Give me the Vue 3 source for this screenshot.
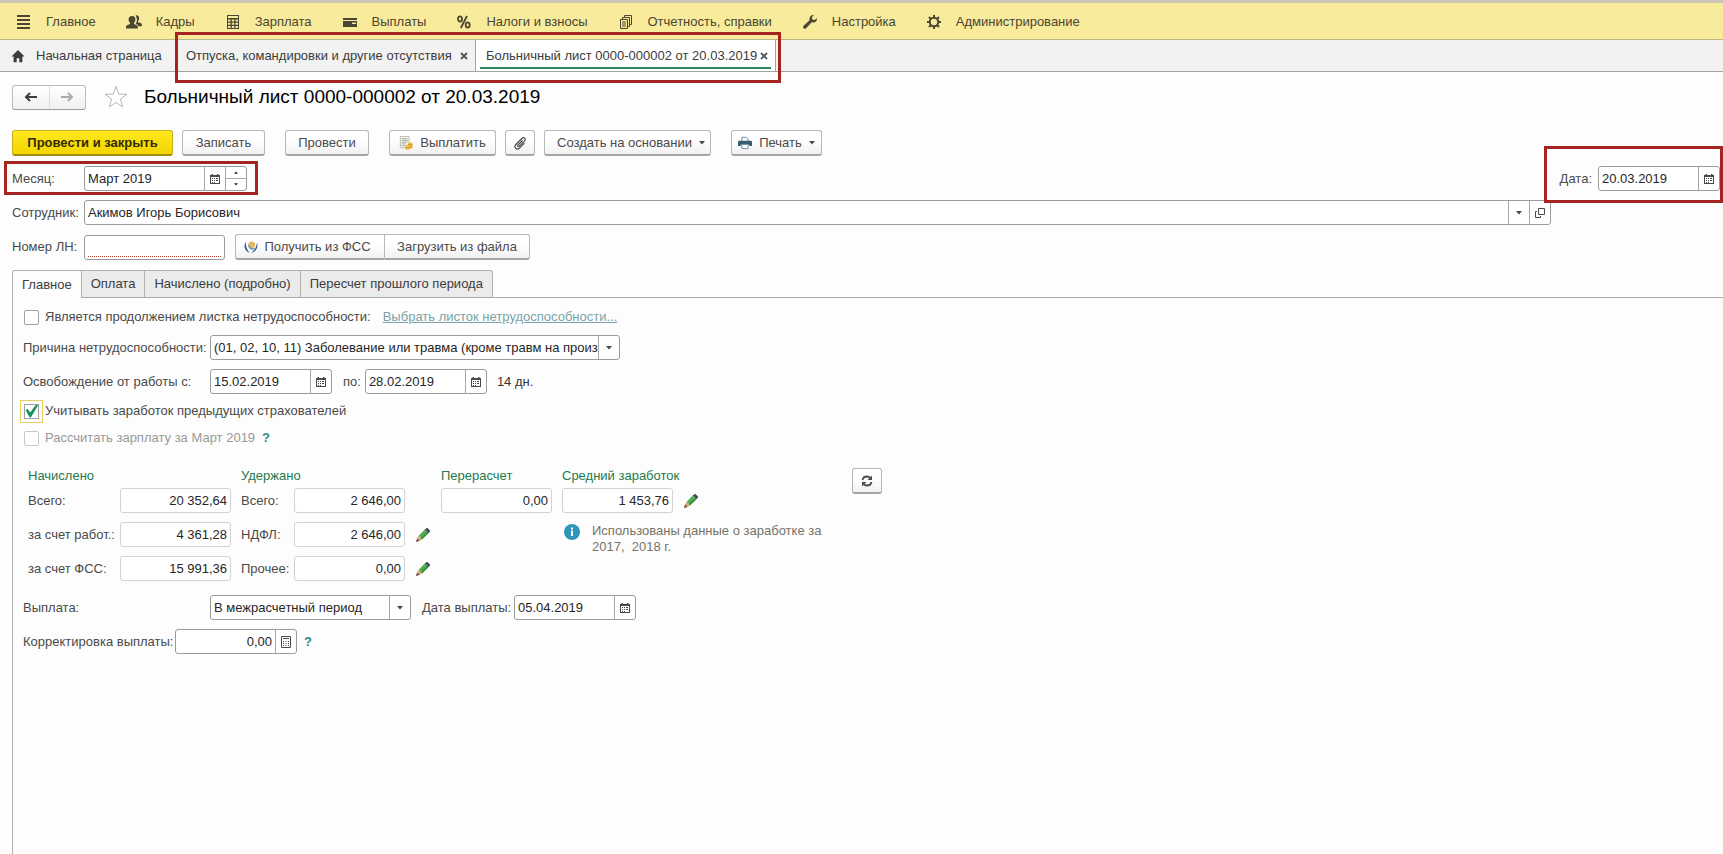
<script setup>
import { ref } from 'vue'

const sections = [
  { icon: 'menu', title: 'Главное' },
  { icon: 'people', title: 'Кадры' },
  { icon: 'calc', title: 'Зарплата' },
  { icon: 'card', title: 'Выплаты' },
  { icon: 'percent', title: 'Налоги и взносы' },
  { icon: 'docs', title: 'Отчетность, справки' },
  { icon: 'wrench', title: 'Настройка' },
  { icon: 'gear', title: 'Администрирование' },
]

const windows = [
  { title: 'Отпуска, командировки и другие отсутствия', active: false },
  { title: 'Больничный лист 0000-000002 от 20.03.2019', active: true },
]

const pages = ['Главное', 'Оплата', 'Начислено (подробно)', 'Пересчет прошлого периода']
const page = ref(0)

const accrued = [
  { id: 'acc-total', label: 'Всего:', value: '20 352,64' },
  { id: 'acc-employer', label: 'за счет работ.:', value: '4 361,28' },
  { id: 'acc-fss', label: 'за счет ФСС:', value: '15 991,36' },
]
const withheld = [
  { id: 'wh-total', label: 'Всего:', value: '2 646,00', edit: false },
  { id: 'wh-ndfl', label: 'НДФЛ:', value: '2 646,00', edit: true },
  { id: 'wh-other', label: 'Прочее:', value: '0,00', edit: true },
]

const month = ref('Март 2019')
const docDate = ref('20.03.2019')
const sheetNumber = ref('')
const dateFrom = ref('15.02.2019')
const dateTo = ref('28.02.2019')
const payDate = ref('05.04.2019')
const correction = ref('0,00')
const isContinuation = ref(false)
const usePrevious = ref(true)
</script>

<template>
  <div class="app">
    <svg class="sprite" aria-hidden="true">
      <symbol id="i-menu" viewBox="0 0 16 16"><path d="M1 1h13v2H1zM1 5h13v2H1zM1 9h13v2H1zM1 13h13v2H1z" fill="currentColor" /></symbol>
      <symbol id="i-people" viewBox="0 0 16 16">
        <path d="M9.500 1.500c2.200-.8 3.800.7 3.700 2.900-.1 1.300-.6 2-1.200 2.600v1l3 1.200c.6.300.9.800.9 1.400v1.600h-3.500c-.3-1-1-1.500-2-1.900l-.9-.4c.9-1 1.400-2.200 1.400-3.700 0-2-.5-3.500-1.400-4.700z" fill="currentColor" />
        <path d="M6 2c2.300 0 3.400 1.500 3.400 3.500 0 1.500-.6 2.600-1.400 3.300v1.200l2.800 1.200c.7.300 1 .9 1 1.600v1.700H0v-1.700c0-.7.3-1.300 1-1.600L4 10V8.800c-.9-.7-1.400-1.800-1.400-3.300C2.600 3.500 3.700 2 6 2z" fill="currentColor" />
      </symbol>
      <symbol id="i-calc" viewBox="0 0 16 16">
        <path d="M2 1h12v14H2zM3 2v2h10V2zM3 5.500v2h2.500v-2zM6.800 5.500v2h2.500v-2zM10.500 5.500v2H13v-2zM3 8.700v2h2.500v-2zM6.800 8.700v2h2.500v-2zM10.500 8.700v2H13v-2zM3 12v2h2.500v-2zM6.800 12v2h2.500v-2zM10.500 12v2H13v-2z" fill="currentColor" fill-rule="evenodd" />
      </symbol>
      <symbol id="i-card" viewBox="0 0 16 16"><path d="M1 4h14v2H1zM1 7h14v6H1zM10 8.500V10h4V8.500z" fill="currentColor" fill-rule="evenodd" /></symbol>
      <symbol id="i-percent" viewBox="0 0 16 16">
        <g fill="none" stroke="currentColor" stroke-width="1.800"><ellipse cx="4" cy="5" rx="2" ry="2.600" /><ellipse cx="11.700" cy="11" rx="2" ry="2.600" /><path d="M11 2 4.800 14" /></g>
      </symbol>
      <symbol id="i-docs" viewBox="0 0 16 16">
        <path d="M2.500 5.500h7v9h-7zM4.500 5V3.500h7v9H10M6.500 3V1.500h7v9H12M4 8h4M4 10h4M4 12h4" fill="none" stroke="currentColor" />
      </symbol>
      <symbol id="i-wrench" viewBox="0 0 16 16">
        <path d="M15 4.200c.3 2.600-1.700 4.500-4.300 4.200-.7-.1-1.100 0-1.500.4l-4.800 5.300c-.8.900-2 .9-2.800.2-.8-.8-.7-2 .2-2.800l5.300-4.800c.4-.4.5-.8.4-1.500C7.300 2.700 9.400.7 12 1.100L9.900 3.300l.4 2.300 2.400.5z" fill="currentColor" />
      </symbol>
      <symbol id="i-gear" viewBox="0 0 16 16">
        <circle cx="8" cy="8" r="4.200" fill="none" stroke="currentColor" stroke-width="2" />
        <path d="M8 1v3M8 12v3M1 8h3M12 8h3M3 3l2.200 2.200M10.800 10.800 13 13M13 3l-2.200 2.200M5.200 10.800 3 13" stroke="currentColor" stroke-width="2" />
      </symbol>
      <symbol id="i-home" viewBox="0 0 16 16"><path d="M8 1 .5 8.500H3V15h3.500v-4.500h3V15H13V8.500h2.500z" fill="currentColor" /></symbol>
      <symbol id="i-close" viewBox="0 0 8 8"><path d="m1 1 6 6M7 1 1 7" stroke="currentColor" stroke-width="1.800" /></symbol>
      <symbol id="i-arrow" viewBox="0 0 14 10"><path d="M13 5H2.500M6 1 2 5l4 4" fill="none" stroke="currentColor" stroke-width="2" /></symbol>
      <symbol id="i-star" viewBox="0 0 24 24"><path d="m12 1.500 2.700 7.600 8.100.2-6.400 4.900 2.300 7.800-6.700-4.600-6.700 4.600 2.300-7.800-6.400-4.900 8.100-.2z" fill="#fff" stroke="currentColor" /></symbol>
      <symbol id="i-calendar" viewBox="0 0 10 10">
        <path d="M0 1h1.500V0h1.500v1h4V0h1.500v1H10v9H0zM1 3v6h8V3z" fill="currentColor" fill-rule="evenodd" />
        <path d="M2 4h1v1H2zM4 4h1v1H4zM6 4h2v1H6zM2 6h1v1H2zM4 6h1v1H4zM6 6h2v1H6zM2 8h1v1H2zM4 8h1v1H4z" fill="currentColor" />
      </symbol>
      <symbol id="i-minicalc" viewBox="0 0 10 12">
        <path d="M.5.5h9v11h-9zM2 2.500h6" fill="none" stroke="currentColor" />
        <path d="M2 5h1v1H2zM4.500 5h1v1h-1zM7 5h1v1H7zM2 7h1v1H2zM4.500 7h1v1h-1zM7 7h1v1H7zM2 9h1v1H2zM4.500 9h1v1h-1zM7 9h1v1H7z" fill="currentColor" />
      </symbol>
      <symbol id="i-down" viewBox="0 0 6 4"><path d="M0 0h6L3 3.500z" fill="currentColor" /></symbol>
      <symbol id="i-open" viewBox="0 0 10 10"><path d="M3.500.5h6v6h-6zM2 3.500H.5v6h5V8" fill="none" stroke="currentColor" /></symbol>
      <symbol id="i-clip" viewBox="0 0 14 14">
        <path d="m9.500 4.500-4.600 4.600c-.9.900.3 2.100 1.200 1.200l5.500-5.500C13.500 2.900 11 .5 9.100 2.300L2.900 8.500c-2.600 2.700 1 6.200 3.600 3.600l5-5" fill="none" stroke="currentColor" stroke-width="1.200" />
      </symbol>
      <symbol id="i-pay" viewBox="0 0 16 16">
        <path d="M1.500.5h10v13h-10z" fill="#fdfcf6" stroke="#b3b1a4" />
        <path d="M3 3h7M3 5h7M3 7h7M3 9h5M3 11h4" stroke="#8d9b97" />
        <path d="M7 11.500c0-.9 1.300-1.500 3-1.500V8.500c0-.7 1.200-1.200 2.800-1.200s2.700.5 2.700 1.200V13c0 .7-1 1.200-2.300 1.300-.4.900-1.600 1.400-3.200 1.400s-3-.6-3-1.400z" fill="#f0c04e" />
        <path d="M7.300 12.800c1.500.9 4 .9 5.500 0M10.300 9.500c1.500.7 3.500.7 5 0M12.800 12.300c1 0 2-.2 2.600-.6" fill="none" stroke="#c98d2c" />
      </symbol>
      <symbol id="i-printer" viewBox="0 0 16 14">
        <path d="M4.500 5V.5h5l2 2V5" fill="#fff" stroke="#5c8296" />
        <path d="M1.500 4.500h13c.8 0 1.500.6 1.500 1.500v4.500h-3V9H3v1.500H0V6c0-.9.700-1.500 1.500-1.500z" fill="#375a6e" />
        <path d="M4.500 8.500h7v5h-7z" fill="#fff" stroke="#5c8296" />
      </symbol>
      <symbol id="i-fss" viewBox="0 0 16 16">
        <path d="M2.800 3C.2 6.500 1.500 12 6.500 13.800 3.800 10.500 2.600 7 2.800 3z" fill="#2c5b8c" />
        <path d="M14 3.500c1.500 4.500-1 9.500-6 10.700 3.500-2.400 5.500-6 6-10.700z" fill="#2c5b8c" />
        <circle cx="8.800" cy="5.800" r="3.300" fill="#e6b65a" />
        <path d="M5.300 4.500c-.7 3.500 1.500 6.500 4.900 6.200 1-.1 1.800-.8 2.200-1.700C9 10.300 6.300 8 5.300 4.500z" fill="#6d94b3" />
      </symbol>
      <symbol id="i-pencil" viewBox="0 0 14 14">
        <path d="m0 14 1.200-4.300 3.100 3.100z" fill="#5a4635" />
        <path d="m.9 10.800 1.900-3.100 3.500 3.500-3.100 1.900z" fill="#d9a577" />
        <path d="m2.700 7.800 6-6.200 3.700 3.700-6.200 6z" fill="#55ad52" />
        <path d="m4.900 10 6.200-6 1.300 1.300-6.200 6z" fill="#3a8f3f" />
        <path d="M8.700 1.600 10.300.2c.5-.4 1-.4 1.500 0l2 2c.4.500.4 1 0 1.500l-1.400 1.600z" fill="#42525a" />
      </symbol>
      <symbol id="i-info" viewBox="0 0 16 16">
        <circle cx="8" cy="8" r="8" fill="#2f95ba" /><path d="M7 6.500h2V12H7zM7 3.500h2v2H7z" fill="#fff" />
      </symbol>
      <symbol id="i-refresh" viewBox="0 0 12 12">
        <path d="M1.500 5C2 2.500 4 1.500 6 1.500c1.500 0 2.500.5 3.300 1.500M10.500 7C10 9.500 8 10.500 6 10.500c-1.500 0-2.500-.5-3.300-1.500" fill="none" stroke="currentColor" stroke-width="1.800" />
        <path d="M11 .5V5H6.500zM1 11.500V7h4.500z" fill="currentColor" />
      </symbol>
    </svg>

    <nav class="sections">
      <a v-for="s in sections" :key="s.title" href="#" class="section">
        <svg class="ic16"><use :href="'#i-' + s.icon" /></svg>
        <span>{{ s.title }}</span>
      </a>
    </nav>

    <div class="windows">
      <a href="#" class="home">
        <svg class="ic14"><use href="#i-home" /></svg>
        <span>Начальная страница</span>
      </a>
      <div class="opened marked">
        <div v-for="w in windows" :key="w.title" class="win" :class="{ active: w.active }">
          <a href="#">{{ w.title }}</a>
          <button type="button" class="close" aria-label="Закрыть"><svg class="ic8"><use href="#i-close" /></svg></button>
        </div>
      </div>
    </div>

    <main>
      <header class="title">
        <div class="history">
          <button type="button" aria-label="Назад"><svg class="arrow"><use href="#i-arrow" /></svg></button>
          <button type="button" aria-label="Вперед" class="forward"><svg class="arrow"><use href="#i-arrow" /></svg></button>
        </div>
        <button type="button" class="star" aria-label="В избранное"><svg class="ic24"><use href="#i-star" /></svg></button>
        <h1>Больничный лист 0000-000002 от 20.03.2019</h1>
      </header>

      <div class="commands">
        <button type="button" class="btn primary">Провести и закрыть</button>
        <button type="button" class="btn save">Записать</button>
        <button type="button" class="btn post">Провести</button>
        <button type="button" class="btn pay"><svg class="ic14"><use href="#i-pay" /></svg>Выплатить</button>
        <button type="button" class="btn icon" aria-label="Файлы"><svg class="ic14"><use href="#i-clip" /></svg></button>
        <button type="button" class="btn create">Создать на основании<svg class="tri"><use href="#i-down" /></svg></button>
        <button type="button" class="btn print"><svg class="ic14"><use href="#i-printer" /></svg>Печать<svg class="tri"><use href="#i-down" /></svg></button>
      </div>

      <div class="head">
        <div class="row between">
          <div class="row marked month">
            <label for="month" class="cap">Месяц:</label>
            <div class="field w-month">
              <input id="month" v-model="month" type="text" />
              <button type="button" aria-label="Календарь"><svg class="ic10"><use href="#i-calendar" /></svg></button>
              <div class="spin">
                <button type="button" aria-label="Следующий месяц"><svg class="mini up"><use href="#i-down" /></svg></button>
                <button type="button" aria-label="Предыдущий месяц"><svg class="mini"><use href="#i-down" /></svg></button>
              </div>
            </div>
          </div>
          <div class="row marked date">
            <label for="doc-date">Дата:</label>
            <div class="field w-date">
              <input id="doc-date" v-model="docDate" type="text" />
              <button type="button" aria-label="Календарь"><svg class="ic10"><use href="#i-calendar" /></svg></button>
            </div>
          </div>
        </div>

        <div class="row employee">
          <label for="employee" class="cap">Сотрудник:</label>
          <div class="field grow">
            <div class="pick">
              <select id="employee"><option>Акимов Игорь Борисович</option></select>
              <span class="drop"><svg class="tri"><use href="#i-down" /></svg></span>
            </div>
            <button type="button" aria-label="Открыть"><svg class="ic10"><use href="#i-open" /></svg></button>
          </div>
        </div>

        <div class="row">
          <label for="sheet" class="cap">Номер ЛН:</label>
          <div class="field w-sheet required"><input id="sheet" v-model="sheetNumber" type="text" /></div>
          <div class="pair">
            <button type="button" class="btn fss"><svg class="ic16"><use href="#i-fss" /></svg>Получить из ФСС</button>
            <button type="button" class="btn load">Загрузить из файла</button>
          </div>
        </div>
      </div>

      <div class="pages" role="tablist">
        <button
          v-for="(p, i) in pages"
          :key="p"
          type="button"
          role="tab"
          :aria-selected="page === i"
          :class="{ current: page === i }"
          @click="page = i"
        >{{ p }}</button>
      </div>

      <section class="panel">
        <div class="row check">
          <input id="cont" v-model="isContinuation" type="checkbox" />
          <label for="cont">Является продолжением листка нетрудоспособности:</label>
          <a href="#" class="link">Выбрать листок нетрудоспособности...</a>
        </div>

        <div class="row reason">
          <label for="reason" class="lead">Причина нетрудоспособности:</label>
          <div class="field w-reason">
            <div class="pick">
              <select id="reason"><option>(01, 02, 10, 11) Заболевание или травма (кроме травм на производстве)</option></select>
              <span class="drop"><svg class="tri"><use href="#i-down" /></svg></span>
            </div>
          </div>
        </div>

        <div class="row period">
          <label for="from" class="lead">Освобождение от работы с:</label>
          <div class="field w-date">
            <input id="from" v-model="dateFrom" type="text" />
            <button type="button" aria-label="Календарь"><svg class="ic10"><use href="#i-calendar" /></svg></button>
          </div>
          <label for="to" class="to">по:</label>
          <div class="field w-date">
            <input id="to" v-model="dateTo" type="text" />
            <button type="button" aria-label="Календарь"><svg class="ic10"><use href="#i-calendar" /></svg></button>
          </div>
          <span class="days">14 дн.</span>
        </div>

        <div class="row check focused">
          <input id="prev" v-model="usePrevious" type="checkbox" />
          <label for="prev">Учитывать заработок предыдущих страхователей</label>
        </div>

        <div class="row check muted">
          <input id="salary" type="checkbox" disabled />
          <label for="salary">Рассчитать зарплату за Март 2019</label>
          <button type="button" class="help">?</button>
        </div>

        <div class="totals">
          <div class="group">
            <h2>Начислено</h2>
            <div v-for="r in accrued" :key="r.id" class="row">
              <label :for="r.id" class="c-acc">{{ r.label }}</label>
              <input :id="r.id" class="sum" type="text" readonly :value="r.value" />
            </div>
          </div>
          <div class="group held">
            <h2>Удержано</h2>
            <div v-for="r in withheld" :key="r.id" class="row">
              <label :for="r.id" class="c-held">{{ r.label }}</label>
              <input :id="r.id" class="sum" type="text" readonly :value="r.value" />
              <button v-if="r.edit" type="button" class="edit" aria-label="Изменить"><svg class="ic14"><use href="#i-pencil" /></svg></button>
            </div>
          </div>
          <div class="group recalc">
            <h2><label for="recalc">Перерасчет</label></h2>
            <input id="recalc" class="sum" type="text" readonly value="0,00" />
          </div>
          <div class="group average">
            <h2><label for="average">Средний заработок</label></h2>
            <div class="row">
              <input id="average" class="sum" type="text" readonly value="1 453,76" />
              <button type="button" class="edit" aria-label="Изменить"><svg class="ic14"><use href="#i-pencil" /></svg></button>
            </div>
            <div class="note">
              <svg class="ic16"><use href="#i-info" /></svg>
              <p>Использованы данные о заработке за<br />2017,&nbsp; 2018 г.</p>
            </div>
          </div>
          <button type="button" class="btn icon" aria-label="Обновить"><svg class="ic12"><use href="#i-refresh" /></svg></button>
        </div>

        <div class="row payout">
          <label for="payout" class="lead">Выплата:</label>
          <div class="field w-payout">
            <div class="pick">
              <select id="payout"><option>В межрасчетный период</option></select>
              <span class="drop"><svg class="tri"><use href="#i-down" /></svg></span>
            </div>
          </div>
          <label for="pay-date" class="paydate">Дата выплаты:</label>
          <div class="field w-date">
            <input id="pay-date" v-model="payDate" type="text" />
            <button type="button" aria-label="Календарь"><svg class="ic10"><use href="#i-calendar" /></svg></button>
          </div>
        </div>

        <div class="row correction">
          <label for="corr" class="corr">Корректировка выплаты:</label>
          <div class="field w-date number">
            <input id="corr" v-model="correction" type="text" />
            <button type="button" aria-label="Калькулятор"><svg class="ic12"><use href="#i-minicalc" /></svg></button>
          </div>
          <button type="button" class="help">?</button>
        </div>
      </section>
    </main>
  </div>
</template>

<style>
body {
  margin: 0;
  background: #fdfdfd;
}
</style>

<style scoped>
* {
  box-sizing: border-box;
}
.app {
  display: flex;
  flex-direction: column;
  min-height: 100vh;
  font: 13px/16px "Liberation Sans", Arial, sans-serif;
  color: #4a4a4a;
  overflow-x: hidden;
}
a {
  color: inherit;
  text-decoration: none;
}
button,
input,
select {
  font: inherit;
  color: inherit;
  margin: 0;
}
button {
  padding: 0;
  border: 0;
  background: none;
}
svg {
  display: block;
  flex: none;
}
.sprite {
  position: absolute;
  width: 0;
  height: 0;
}
.ic8 { width: 8px; height: 8px; }
.ic10 { width: 10px; height: 10px; }
.ic12 { width: 12px; height: 12px; }
.ic14 { width: 14px; height: 14px; }
.ic16 { width: 16px; height: 16px; }
.ic24 { width: 24px; height: 24px; }
.tri { width: 6px; height: 4px; }
.mini { width: 4px; height: 3px; }
.up { transform: rotate(180deg); }
.arrow { width: 14px; height: 10px; }

.sections {
  display: flex;
  align-items: center;
  gap: 30px;
  height: 40px;
  padding: 1px 16px 0;
  border-top: 3px solid #c9c4b4;
  border-bottom: 1px solid #bdb78c;
  background: #f8eb9c;
  color: #4a4631;
}
.section {
  display: flex;
  align-items: center;
  gap: 14px;
  white-space: nowrap;
}
.windows {
  display: flex;
  height: 32px;
  border-bottom: 1px solid #a0a5a0;
  background: #f2f2f2;
  color: #3c3c3c;
}
.home {
  display: flex;
  align-items: center;
  gap: 11px;
  width: 176px;
  padding-left: 11px;
  white-space: nowrap;
}
.opened {
  display: flex;
}
.win {
  display: flex;
  align-items: center;
  justify-content: space-between;
  width: 300px;
  padding: 0 7px 0 10px;
  border-right: 1px solid #a0a5a0;
  white-space: nowrap;
}
.win.active {
  background: linear-gradient(#2e8560, #2e8560) 4px 27px / 291px 2px no-repeat #fff;
}
.close {
  color: #555;
}

.marked {
  position: relative;
}
.marked::after {
  content: "";
  position: absolute;
  border: 3px solid #a52420;
  pointer-events: none;
}
.opened::after {
  inset: -8px -5px -12px -1px;
}
.month::after {
  inset: -5px -11px -4px -8px;
}
.date::after {
  inset: -20px -3px -12px -16px;
}

main {
  display: flex;
  flex: 1;
  flex-direction: column;
  padding: 12px 0 0 12px;
}
.title {
  display: flex;
  align-items: center;
  height: 26px;
}
.history {
  display: flex;
  width: 74px;
  height: 25px;
  border: 1px solid #bcbcbc;
  border-bottom-color: #999;
  border-radius: 3px;
  background: linear-gradient(#fff, #f0f0f0);
  color: #3f3f3f;
}
.history button {
  display: flex;
  flex: 1;
  align-items: center;
  justify-content: center;
}
.history .forward {
  border-left: 1px solid #ddd;
  color: #aaa;
}
.forward svg {
  transform: scaleX(-1);
}
.star {
  margin: 0 16px 0 18px;
  color: #b5b5b5;
}
h1 {
  margin: 0;
  font-size: 19px;
  line-height: 24px;
  font-weight: 400;
  color: #000;
}
.commands {
  display: flex;
  margin-top: 20px;
}
.btn {
  display: flex;
  align-items: center;
  justify-content: center;
  height: 26px;
  padding-top: 1px;
  border: 1px solid #b8b8b8;
  border-bottom: 2px solid #a5a5a5;
  border-radius: 3px;
  background: linear-gradient(#fff 40%, #f1f1f1);
  white-space: nowrap;
}
.primary {
  width: 161px;
  border-color: #c9b01a #c9b01a #a08c14;
  background: linear-gradient(#ffe81f, #f3d500);
  font-weight: 700;
  color: #332c00;
}
.save { width: 83px; margin-left: 9px; }
.post { width: 84px; margin-left: 20px; }
.pay { width: 107px; margin-left: 20px; gap: 7px; }
.icon { width: 30px; margin-left: 9px; }
.create { width: 167px; margin-left: 9px; padding-left: 7px; gap: 7px; }
.print { width: 91px; margin-left: 20px; gap: 7px; }

.head {
  display: flex;
  flex-direction: column;
  gap: 9px;
  margin-top: 10px;
}
.row {
  display: flex;
  align-items: center;
  white-space: nowrap;
}
.between {
  justify-content: space-between;
  padding-right: 3px;
}
.cap {
  width: 72px;
}
.date {
  gap: 6px;
}
.employee {
  padding-right: 172px;
}
.field {
  display: flex;
  height: 25px;
  border: 1px solid #9b9b9b;
  border-radius: 3px;
  background: #fff;
  color: #262626;
  overflow: hidden;
}
.field input {
  flex: 1;
  min-width: 0;
  padding: 0 3px;
  border: 0;
  background: none;
  outline: 0;
}
.field > button,
.drop {
  display: flex;
  flex: none;
  align-items: center;
  justify-content: center;
  width: 21px;
  border-left: 1px solid #a8a8a8;
  color: #4a4a4a;
}
.spin {
  display: flex;
  flex: none;
  flex-direction: column;
  width: 21px;
  border-left: 1px solid #a8a8a8;
}
.spin button {
  display: flex;
  flex: 1;
  align-items: center;
  justify-content: center;
}
.spin button + button {
  border-top: 1px solid #a8a8a8;
}
.pick {
  display: grid;
  flex: 1;
  min-width: 0;
}
.pick > * {
  grid-area: 1 / 1;
}
.pick select {
  width: 100%;
  min-width: 0;
  padding: 0 21px 0 3px;
  border: 0;
  appearance: none;
  background: none;
  outline: 0;
}
.drop {
  justify-self: end;
  pointer-events: none;
}
.grow { flex: 1; }
.w-month { width: 163px; }
.w-date { width: 122px; }
.w-sheet { width: 141px; }
.w-reason { width: 410px; }
.w-payout { width: 201px; }
.required {
  padding: 0 3px 2px;
}
.required input {
  border-bottom: 1px dotted #b03a2a;
}
.number input {
  text-align: right;
}
.pair {
  display: flex;
  margin-left: 10px;
}
.fss {
  width: 149px;
  gap: 5px;
  padding-right: 6px;
  border-right: 0;
  border-radius: 3px 0 0 3px;
}
.load {
  width: 146px;
  border-radius: 0 3px 3px 0;
}

.pages {
  display: flex;
  height: 28px;
  margin-top: 10px;
  border-bottom: 1px solid #a8a8a8;
}
.pages button {
  height: 27px;
  padding: 0 9px;
  border: 1px solid #b0b0b0;
  border-left: 0;
  border-bottom: 0;
  background: #ebebeb;
  color: #3c3c3c;
  white-space: nowrap;
}
.pages button:first-child {
  border-left: 1px solid #b0b0b0;
  border-radius: 3px 0 0 0;
}
.pages button:last-child {
  border-radius: 0 3px 0 0;
}
.pages .current {
  height: 28px;
  background: #fdfdfd;
}
.panel {
  flex: 1;
  padding: 11px 0 0 10px;
  border-left: 1px solid #b0b0b0;
}
.lead {
  width: 187px;
}
.check {
  height: 16px;
}
.check input {
  display: grid;
  place-items: center;
  width: 15px;
  height: 15px;
  margin: 0 6px 0 1px;
  border: 1px solid #a0a0a0;
  border-radius: 2px;
  appearance: none;
  background: #fff;
}
.check input:checked::after {
  content: "";
  width: 13px;
  height: 13px;
  background: #16905a;
  clip-path: polygon(5% 42%, 22% 34%, 40% 62%, 85% 0, 100% 5%, 46% 98%, 34% 98%);
}
.link {
  margin-left: 12px;
  color: #7ba3a8;
  text-decoration: underline;
}
.reason { margin-top: 10px; }
.period { margin-top: 9px; }
.to {
  margin: 0 4px 0 11px;
}
.days {
  margin-left: 10px;
  color: #333;
}
.focused {
  height: 24px;
  margin-top: 5px;
}
.focused input {
  border-radius: 0;
  outline: 1px solid #e6cf62;
  outline-offset: 3px;
}
.muted {
  margin-top: 7px;
  color: #999;
}
.muted input {
  border-color: #c8c8c8;
}
.help {
  margin-left: 7px;
  font-weight: 700;
  color: #2e8c86;
}
.totals {
  display: flex;
  align-items: flex-start;
  margin: 22px 0 0 5px;
}
.group {
  display: flex;
  flex-direction: column;
  gap: 9px;
}
h2 {
  margin: 0 0 -5px;
  font: inherit;
  color: #237a4e;
}
.c-acc { width: 92px; }
.c-held { width: 53px; }
.held {
  width: 200px;
  margin-left: 10px;
}
.average {
  width: 281px;
  margin-left: 10px;
}
.sum {
  width: 111px;
  height: 25px;
  padding: 0 3px;
  border: 1px solid #d2d2d2;
  border-radius: 3px;
  background: #fff;
  color: #262626;
  text-align: right;
  outline: 0;
}
.edit {
  margin-left: 11px;
}
.note {
  display: flex;
  gap: 12px;
  padding: 2px 0 0 2px;
  color: #757466;
}
.note p {
  margin: 0;
  margin-top: -1px;
  white-space: nowrap;
}
.payout { margin-top: 14px; }
.paydate {
  width: 92px;
  margin-left: 11px;
}
.correction { margin-top: 9px; }
.corr {
  width: 152px;
}
</style>
